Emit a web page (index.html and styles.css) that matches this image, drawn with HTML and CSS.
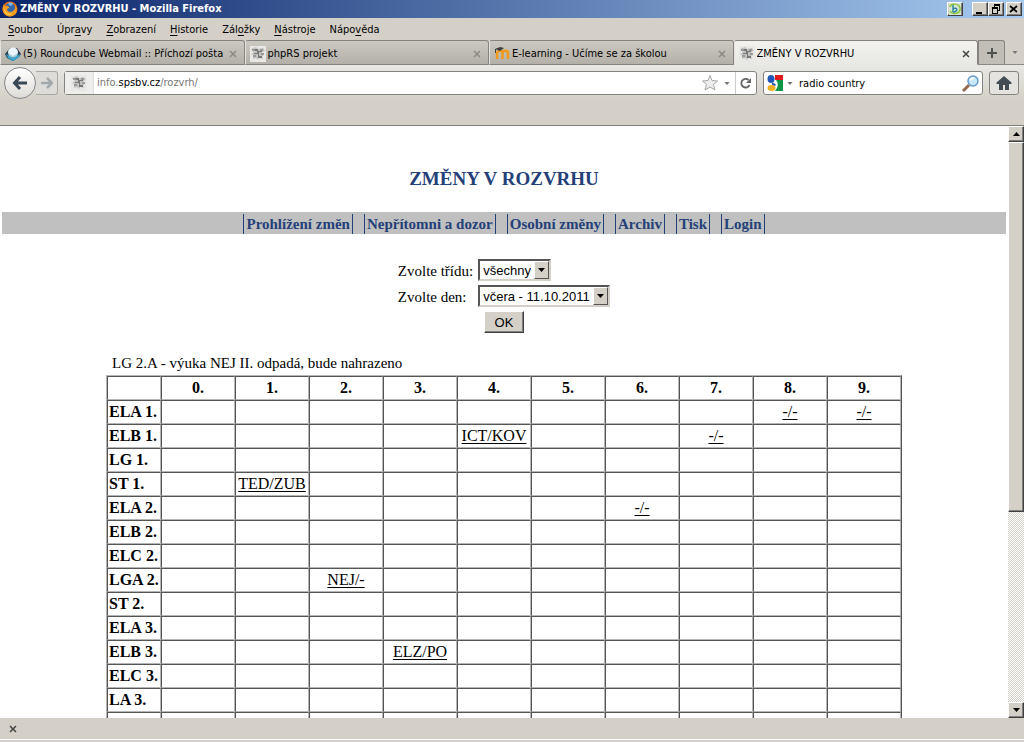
FILE: index.html
```html
<!DOCTYPE html>
<html lang="cs">
<head>
<meta charset="utf-8">
<title>ZMĚNY V ROZVRHU</title>
<link rel="stylesheet" href="styles.css">
</head>
<body>
<svg class="defs" aria-hidden="true">
  <symbol id="site" viewBox="0 0 16 16"><rect width="16" height="16" fill="#e8e8e6"/><path d="M1 3l5-2 2 2 5-1 2 3-3 1 2 3-2 1 1 3-4-1-1 2-2-2-3 1V9L1 8l3-2z" fill="#c2c2c0"/><path d="M4 3h4v2h4v1H9v4h3v2H8V8H4V7h3V5H4z" fill="#777"/><path d="M2 4h3M10 4h3M3 10h3M11 8h3" stroke="#999" stroke-width="2"/></symbol>
  <symbol id="cross" viewBox="0 0 8 8"><path d="M1 1l6 6M7 1L1 7" fill="none" stroke="currentColor" stroke-width="1.500"/></symbol>
  <symbol id="down" viewBox="0 0 7 4"><path d="M0 0h7L3.500 4z" fill="currentColor"/></symbol>
</svg>
<header class="titlebar">
  <svg class="icon" viewBox="0 0 16 16"><circle cx="8" cy="8" r="7.500" fill="#e66a12"/><circle cx="8" cy="7" r="5" fill="#3168ac"/><path d="M6 2c2-1 5 0 5 1L9 5 7 4z" fill="#80b8e0"/><path d="M2 3c0 2 1 2 3 2 1 0 3 1 2 2L5 8c0 3 4 4 6 2 2-1 3-4 2-6 3 4 2 8-1 10-4 3-10 1-11-4-1-2 0-5 1-7z" fill="#f79a20"/><path d="M2 7c1 5 5 7 9 5-4 4-9 1-9-5z" fill="#ffdf55"/></svg>
  <h1 class="window-title">ZMĚNY V ROZVRHU - Mozilla Firefox</h1>
  <button class="win-btn badge-btn" aria-label="b"><svg width="12" height="12" viewBox="0 0 12 12"><rect width="12" height="12" fill="#d9e6d3"/><path d="M1 4c1-4 9-4 10 1 1 6-8 7-10 3" stroke="#8cc63f" stroke-width="1.500" fill="none"/><path d="M4 2v7M4 6c4-3 6 3 0 3" stroke="#3187a4" stroke-width="1.500" fill="none"/></svg></button>
  <div class="win-group">
    <button class="win-btn" aria-label="Minimalizovat"><svg width="10" height="10" viewBox="0 0 10 10"><path d="M1 8h6v2H1z"/></svg></button>
    <button class="win-btn" aria-label="Obnovit"><svg width="10" height="10" viewBox="0 0 10 10"><path d="M3 0h6v7H7V6h1V2H4v1H3zM1 3h6v7H1zm1 2v4h4V5z" fill-rule="evenodd"/></svg></button>
  </div>
  <button class="win-btn" aria-label="Zavřít"><svg width="10" height="10" viewBox="0 0 10 10"><path d="M1 2l7 6M8 2L1 8" stroke="#000" stroke-width="1.700"/></svg></button>
</header>
<nav class="menubar">
  <button><u>S</u>oubor</button><button>Úpr<u>a</u>vy</button><button><u>Z</u>obrazení</button><button><u>H</u>istorie</button><button>Zál<u>o</u>žky</button><button><u>N</u>ástroje</button><button>Nápo<u>v</u>ěda</button>
</nav>
<div class="tabs">
  <div class="tab"><svg class="icon" viewBox="0 0 16 16"><path d="M0 8l5-6 7 0 4 6-2 3-6 4-6-3z" fill="#283d4b"/><path d="M1 8l7 4 7-4-1 3-6 4-5-3z" fill="#37a7d4"/><ellipse cx="8" cy="6" rx="5" ry="4.500" fill="#e9f5fa"/><path d="M3 7l5 3 5-3-1 3-4 2-4-2z" fill="#a9cfdd"/></svg><span>(5) Roundcube Webmail :: Příchozí pošta</span><button class="close" aria-label="Zavřít panel"><svg width="8" height="8"><use href="#cross"/></svg></button></div>
  <div class="tab"><svg class="icon"><use href="#site"/></svg><span>phpRS projekt</span><button class="close" aria-label="Zavřít panel"><svg width="8" height="8"><use href="#cross"/></svg></button></div>
  <div class="tab"><svg class="icon" viewBox="0 0 16 16"><path d="M3 13V6M8.500 13V7c0-3-5-3-5 0M8.500 13V7c0-3 5.500-3 5.500 0v6" fill="none" stroke="#f09a17" stroke-width="2.500"/><path d="M1 3l5-2 4 1-4 3z" fill="#403e3c"/><path d="M1.500 3v4" stroke="#403e3c"/></svg><span>E-learning - Učíme se za školou</span><button class="close" aria-label="Zavřít panel"><svg width="8" height="8"><use href="#cross"/></svg></button></div>
  <div class="tab active"><svg class="icon"><use href="#site"/></svg><span>ZMĚNY V ROZVRHU</span><button class="close" aria-label="Zavřít panel"><svg width="8" height="8"><use href="#cross"/></svg></button></div>
  <button class="new-tab" aria-label="Nový panel"><svg width="10" height="10" viewBox="0 0 10 10"><path d="M5 0v10M0 5h10" stroke="#4c5154" stroke-width="2"/></svg></button>
  <button class="all-tabs" aria-label="Všechny panely"><svg width="6" height="3"><use href="#down"/></svg></button>
</div>
<div class="toolbar">
  <div class="history">
    <button class="back" aria-label="Zpět"><svg width="16" height="16" viewBox="0 0 16 16"><path d="M8 2L2.500 8 8 14M3 8h12" fill="none" stroke="#3b4956" stroke-width="3"/></svg></button>
    <button class="forward" aria-label="Vpřed"><svg width="12" height="12" viewBox="0 0 12 12"><path d="M6 1l5 5-5 5M0 6h10" fill="none" stroke="#a2a9ad" stroke-width="2.500"/></svg></button>
  </div>
  <div class="field address">
    <span class="identity"><svg class="icon"><use href="#site"/></svg></span>
    <div class="url" role="textbox" contenteditable="true" spellcheck="false" aria-label="Adresa">info.<b>spsbv.cz</b>/rozvrh/</div>
    <button aria-label="Záložka"><svg width="18" height="18" viewBox="0 0 18 18"><path d="M9 1.500l2 5 5.500.500-4 3.500 1.500 5.500-5-3-5 3 1.500-5.500-4-3.500L7 6.500z" fill="#ededed" stroke="#a5a5a5"/></svg></button>
    <button class="drop" aria-label="Historie adres"><svg width="6" height="3"><use href="#down"/></svg></button>
    <button class="reload" aria-label="Obnovit"><svg width="12" height="12" viewBox="0 0 12 12"><path d="M9.500 8A4.300 4.300 0 1 1 8.500 3" fill="none" stroke="#666" stroke-width="1.800"/><path d="M11 1v5H6z" fill="#666"/></svg></button>
  </div>
  <div class="field search">
    <svg class="icon google" viewBox="0 0 16 16"><path d="M8 0h8v5H8z" fill="#e01a1d"/><path d="M9 5h7v11H8c3-4 4-7 1-11z" fill="#129447"/><path d="M0 0h8v9H0z" fill="#fff"/><ellipse cx="4" cy="4" rx="3.500" ry="4" fill="#2256b8"/><path d="M5 8c3 0 5 2 3 3l-3-1z" fill="#2256b8"/><ellipse cx="4.500" cy="13" rx="4" ry="3" fill="#f7b120"/></svg>
    <button class="drop" aria-label="Vyhledávač"><svg width="6" height="3"><use href="#down"/></svg></button>
    <input aria-label="Hledat" value="radio country">
    <button aria-label="Hledat"><svg width="17" height="17" viewBox="0 0 17 17"><path d="M7 10l-6 6" stroke="#94674e" stroke-width="3"/><circle cx="11" cy="6" r="5" fill="#c9e8fb" stroke="#659ccf" stroke-width="1.500"/><path d="M8 5c1-2 3-2 4-2" stroke="#fff" stroke-width="2" fill="none"/></svg></button>
  </div>
  <button class="home" aria-label="Domů"><svg width="16" height="14" viewBox="0 0 16 14"><path d="M8 0l8 7-1 1h-2v6H9V9H7v5H3V8H1L0 7z" fill="#414c55"/></svg></button>
</div>
<div class="viewport">
  <main class="page">
    <h2 class="heading">ZMĚNY V ROZVRHU</h2>
    <nav class="sections"><a href="#">Prohlížení změn</a><a href="#">Nepřítomni a dozor</a><a href="#">Osobní změny</a><a href="#">Archiv</a><a href="#">Tisk</a><a href="#">Login</a></nav>
    <form class="filter">
      <label for="trida">Zvolte třídu:</label>
      <span class="pick"><select id="trida"><option>všechny</option></select><i><svg width="7" height="4"><use href="#down"/></svg></i></span>
      <label for="den">Zvolte den:</label>
      <span class="pick"><select id="den"><option>včera - 11.10.2011</option></select><i><svg width="7" height="4"><use href="#down"/></svg></i></span>
      <button class="ok" type="button">OK</button>
    </form>
    <div class="schedule">
      <p class="note">LG 2.A - výuka NEJ II. odpadá, bude nahrazeno</p>
      <table>
        <thead><tr><td class="corner"></td><th>0.</th><th>1.</th><th>2.</th><th>3.</th><th>4.</th><th>5.</th><th>6.</th><th>7.</th><th>8.</th><th>9.</th></tr></thead>
        <tbody>
          <tr><th>ELA 1.</th><td></td><td></td><td></td><td></td><td></td><td></td><td></td><td></td><td><a href="#">-/-</a></td><td><a href="#">-/-</a></td></tr>
          <tr><th>ELB 1.</th><td></td><td></td><td></td><td></td><td><a href="#">ICT/KOV</a></td><td></td><td></td><td><a href="#">-/-</a></td><td></td><td></td></tr>
          <tr><th>LG 1.</th><td></td><td></td><td></td><td></td><td></td><td></td><td></td><td></td><td></td><td></td></tr>
          <tr><th>ST 1.</th><td></td><td><a href="#">TED/ZUB</a></td><td></td><td></td><td></td><td></td><td></td><td></td><td></td><td></td></tr>
          <tr><th>ELA 2.</th><td></td><td></td><td></td><td></td><td></td><td></td><td><a href="#">-/-</a></td><td></td><td></td><td></td></tr>
          <tr><th>ELB 2.</th><td></td><td></td><td></td><td></td><td></td><td></td><td></td><td></td><td></td><td></td></tr>
          <tr><th>ELC 2.</th><td></td><td></td><td></td><td></td><td></td><td></td><td></td><td></td><td></td><td></td></tr>
          <tr><th>LGA 2.</th><td></td><td></td><td><a href="#">NEJ/-</a></td><td></td><td></td><td></td><td></td><td></td><td></td><td></td></tr>
          <tr><th>ST 2.</th><td></td><td></td><td></td><td></td><td></td><td></td><td></td><td></td><td></td><td></td></tr>
          <tr><th>ELA 3.</th><td></td><td></td><td></td><td></td><td></td><td></td><td></td><td></td><td></td><td></td></tr>
          <tr><th>ELB 3.</th><td></td><td></td><td></td><td><a href="#">ELZ/PO</a></td><td></td><td></td><td></td><td></td><td></td><td></td></tr>
          <tr><th>ELC 3.</th><td></td><td></td><td></td><td></td><td></td><td></td><td></td><td></td><td></td><td></td></tr>
          <tr><th>LA 3.</th><td></td><td></td><td></td><td></td><td></td><td></td><td></td><td></td><td></td><td></td></tr>
          <tr><th></th><td></td><td></td><td></td><td></td><td></td><td></td><td></td><td></td><td></td><td></td></tr>
        </tbody>
      </table>
    </div>
  </main>
  <div class="scrollbar">
    <button aria-label="Nahoru"><svg width="7" height="4" viewBox="0 0 7 4"><path d="M0 4h7L3.500 0z"/></svg></button>
    <div class="track"><div class="thumb"></div></div>
    <button aria-label="Dolů"><svg width="7" height="4"><use href="#down"/></svg></button>
  </div>
</div>
<footer class="statusbar"><button aria-label="Zavřít lištu"><svg width="8" height="8"><use href="#cross"/></svg></button></footer>
</body>
</html>
```
FILE: styles.css
```css
* { box-sizing: border-box; }
body {
  margin: 0;
  height: 100vh;
  display: flex;
  flex-direction: column;
  overflow: hidden;
  background: #d4d0c8;
  color: #000;
  font: 11px "DejaVu Sans Condensed", "DejaVu Sans", sans-serif;
}
button {
  display: flex;
  align-items: center;
  justify-content: center;
  flex: none;
  margin: 0;
  padding: 0;
  border: 0;
  background: none;
  color: inherit;
  font: inherit;
}
svg { display: block; flex: none; }
.defs { position: absolute; width: 0; height: 0; }
.icon { width: 16px; height: 16px; }

.titlebar {
  display: flex;
  align-items: center;
  flex: none;
  gap: 2px;
  height: 18px;
  padding: 0 2px;
  background: linear-gradient(90deg, #0a246a, #a6caf0);
}
.window-title { flex: 1; margin: 0; color: #fff; font-size: 11px; line-height: 18px; white-space: nowrap; }
.win-btn {
  width: 16px;
  height: 14px;
  background: #d4d0c8;
  border: 1px solid;
  border-color: #fff #404040 #404040 #fff;
  box-shadow: inset -1px -1px #808080;
}
.badge-btn { margin-right: 7px; }
.win-group { display: flex; }

.menubar { display: flex; flex: none; gap: 14px; height: 22px; padding: 0 8px; }
.menubar button { white-space: nowrap; }
.menubar u { text-underline-offset: 2px; }

.tabs { display: flex; flex: none; height: 25px; border-bottom: 1px solid #8b8984; }
.tab {
  flex: 1;
  min-width: 0;
  display: flex;
  align-items: center;
  gap: 2px;
  height: 25px;
  padding: 2px 7px 0 4px;
  background: linear-gradient(#ccc9c2, #b3b0aa);
  border: 1px solid #85837f;
  border-left-color: #e5e3df;
  border-radius: 3px 3px 0 0;
  white-space: nowrap;
}
.tab span { flex: 1; overflow: hidden; }
.tab.active { background: linear-gradient(#f3f2ef, #e8e8e4); border-bottom-color: #e8e8e4; }
.close { color: #8b8984; }
.active .close { color: #444; }
.new-tab { width: 27px; background: #c1beb8; border: 1px solid #85837f; border-bottom: 0; border-radius: 0 3px 0 0; }
.all-tabs { width: 19px; color: #777; }

.toolbar {
  display: flex;
  align-items: flex-start;
  flex: none;
  gap: 6px;
  height: 61px;
  padding: 2px 5px 0 4px;
  background: linear-gradient(#e8e8e4, #d4d0c8 36px);
  border-bottom: 1px solid #808080;
}
.history { display: flex; align-items: center; width: 54px; height: 32px; }
.back { width: 32px; height: 32px; border: 1px solid #85858a; border-radius: 50%; background: linear-gradient(#fff, #dedcd8); }
.forward { flex: 1; height: 24px; border: 1px solid #aaa8a5; border-left: 0; border-radius: 0 3px 3px 0; background: #dedcd8; }
.field {
  display: flex;
  align-items: center;
  height: 24px;
  margin-top: 4px;
  border: 1px solid #85837f;
  border-radius: 3px;
  background: #fff;
}
.address { flex: 1; }
.search { flex: 0 1 220px; padding: 0 3px; }
.identity { display: flex; align-items: center; align-self: stretch; padding: 0 6px; background: #eeeeec; border-right: 1px solid #ddd; }
.url { flex: 1; padding-left: 3px; color: #777; line-height: 22px; }
.url b { font-weight: 400; color: #000; }
.drop { width: 16px; height: 22px; color: #777; }
.search .drop { width: 14px; }
.reload { width: 21px; align-self: stretch; border-left: 1px solid #ccc; }
.field input { flex: 1; min-width: 0; border: 0; padding: 0 0 0 2px; background: none; color: #000; font: inherit; }
.home { width: 30px; height: 24px; margin-top: 4px; border: 1px solid #85837f; border-radius: 3px; background: #e5e3df; }

.viewport { flex: 1; display: flex; min-height: 0; background: #fff; }
.page { flex: 1; min-width: 0; overflow: hidden; padding: 42px 2px 0; font: 16px/20px "Liberation Serif", serif; }
.heading { margin: 0 0 22px; color: #234078; font-size: 19px; line-height: 22px; text-align: center; }
.sections { display: flex; justify-content: center; gap: 11px; padding: 2px 0 0; height: 22px; background: #c0c0c0; font-size: 15px; }
.sections a { padding: 0 2px; border: solid #234078; border-width: 0 1px; color: #234078; font-weight: 700; text-decoration: none; white-space: nowrap; line-height: 20px; }
.filter { display: grid; grid-template-columns: max-content max-content; justify-content: center; align-items: center; gap: 4px 5px; margin-top: 25px; font-size: 15px; }
.filter label { padding-top: 2px; }
.pick { position: relative; justify-self: start; display: flex; height: 22px; }
.pick select {
  appearance: none;
  margin: 0;
  padding: 0 18px 0 3px;
  border: 2px solid;
  border-color: #555 #d4d0c8 #d4d0c8 #555;
  border-radius: 0;
  background: #fff;
  color: #000;
  font: 13px "Liberation Sans", sans-serif;
}
.pick i {
  position: absolute;
  inset: 2px 2px 2px auto;
  width: 15px;
  display: flex;
  align-items: center;
  justify-content: center;
  background: #d4d0c8;
  border: 1px solid;
  border-color: #fff #555 #555 #fff;
  pointer-events: none;
}
.ok {
  grid-column: 1 / -1;
  justify-self: center;
  width: 40px;
  height: 22px;
  background: #d4d0c8;
  border: 1px solid;
  border-color: #fff #404040 #404040 #fff;
  box-shadow: inset -1px -1px #808080;
  font: 13px "Liberation Sans", sans-serif;
}
.schedule { width: 796px; max-width: 100%; margin: 20px auto 0; }
.note { margin: 0; padding: 0 6px 2px; font-size: 15px; }
table { width: 100%; table-layout: fixed; border: 1px solid; border-color: #b5b5b5 #555 #555 #b5b5b5; border-spacing: 0; }
th, td { height: 24px; padding: 0 1px; border: 1px solid; border-color: #555 #b5b5b5 #b5b5b5 #555; text-align: center; line-height: 20px; }
.corner { width: 54px; }
tbody th { text-align: left; white-space: nowrap; }
td a { color: #000; text-underline-offset: 2px; }

.scrollbar { flex: none; width: 16px; display: flex; flex-direction: column; }
.scrollbar button, .thumb { background: #d4d0c8; border: 1px solid; border-color: #fff #404040 #404040 #fff; box-shadow: inset -1px -1px #808080; }
.scrollbar button { height: 16px; }
.track { flex: 1; background: repeating-conic-gradient(#d4d0c8 0 25%, #fff 0 50%) 0 0 / 2px 2px; }
.thumb { height: 66%; }
.statusbar { flex: none; display: flex; height: 24px; padding: 0 9px 2px; color: #444; background: linear-gradient(#d4d0c8 21px, #fff 21px 22px, #d4d0c8 22px); }
```
